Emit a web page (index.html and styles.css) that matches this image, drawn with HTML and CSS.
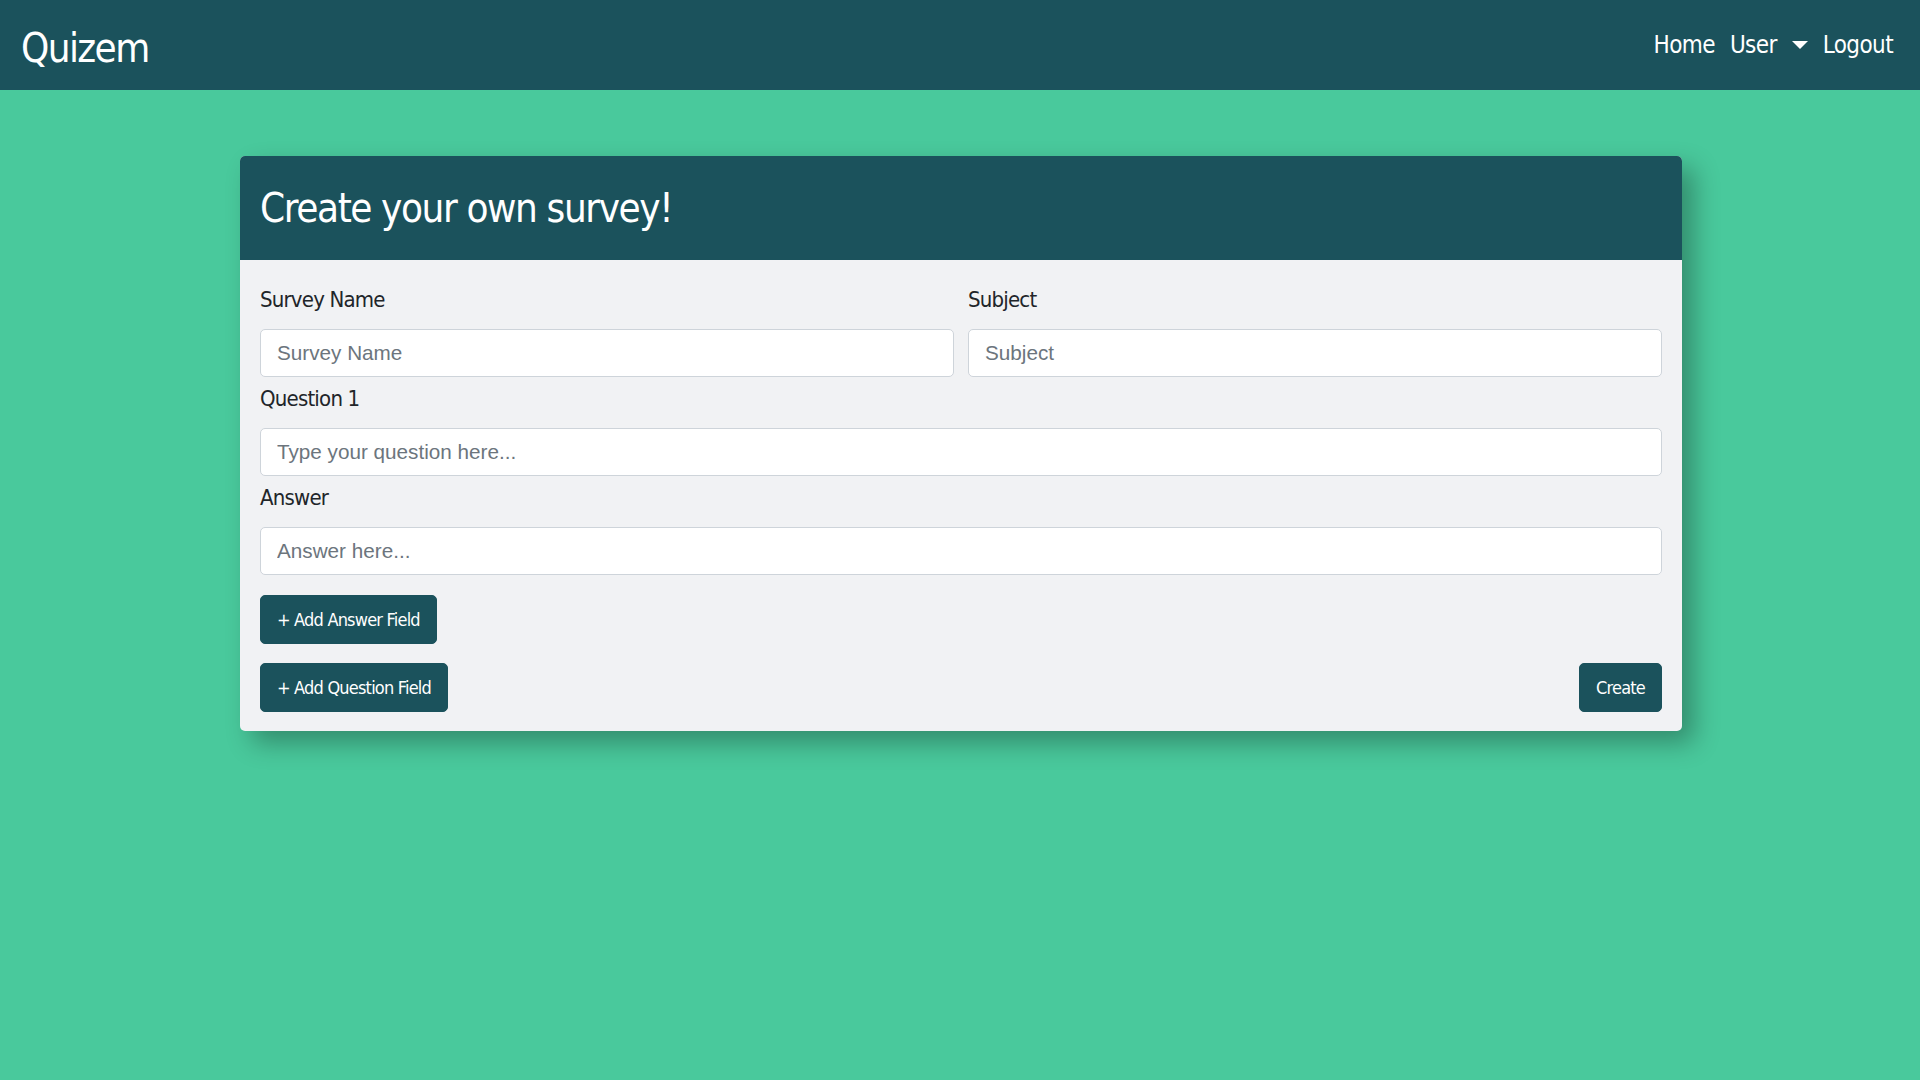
FILE: index.html
```html
<!DOCTYPE html>
<html lang="en">
<head>
<meta charset="utf-8">
<title>Quizem - Create survey</title>
<link rel="stylesheet" href="styles.css">
</head>
<body>
<nav class="navbar">
  <a class="brand" href="#">Quizem</a>
  <ul class="nav">
    <li><a class="nav-link" href="#">Home</a></li>
    <li><a class="nav-link" href="#">User <span class="caret"></span></a></li>
    <li><a class="nav-link" href="#">Logout</a></li>
  </ul>
</nav>
<main class="page">
  <section class="card">
    <header class="card-header">
      <h1 class="card-title">Create your own survey!</h1>
    </header>
    <form class="card-body">
      <div class="row-two">
        <div class="group">
          <label class="label" for="sname">Survey Name</label>
          <input class="input" id="sname" type="text" placeholder="Survey Name">
        </div>
        <div class="group">
          <label class="label" for="subject">Subject</label>
          <input class="input" id="subject" type="text" placeholder="Subject">
        </div>
      </div>
      <div class="group">
        <label class="label" for="q1">Question 1</label>
        <input class="input" id="q1" type="text" placeholder="Type your question here...">
      </div>
      <div class="group">
        <label class="label" for="a1">Answer</label>
        <input class="input" id="a1" type="text" placeholder="Answer here...">
      </div>
      <div class="actions">
        <button class="btn" type="button">+ Add Answer Field</button>
      </div>
      <div class="actions split">
        <button class="btn" type="button">+ Add Question Field</button>
        <button class="btn" type="submit">Create</button>
      </div>
    </form>
  </section>
</main>
</body>
</html>
```
FILE: styles.css
```css
* { box-sizing: border-box; }

html, body {
  margin: 0;
  padding: 0;
}

body {
  min-height: 100vh;
  background: #49c99c;
  font-family: "DejaVu Sans Condensed", "DejaVu Sans", sans-serif;
  font-stretch: condensed;
  color: #212529;
}

.navbar {
  height: 90px;
  background: #1b525c;
  display: flex;
  align-items: flex-start;
  justify-content: space-between;
  padding: 0 27px 0 21px;
}

.brand {
  color: #fff;
  text-decoration: none;
  font-size: 40px;
  letter-spacing: -1.6px;
  line-height: 84px;
  padding-top: 6px;
}

.nav {
  list-style: none;
  margin: 0;
  padding: 0;
  display: flex;
  gap: 15px;
}

.nav-link {
  display: flex;
  align-items: center;
  gap: 15px;
  color: #fff;
  text-decoration: none;
  font-size: 24px;
  letter-spacing: -0.6px;
  line-height: 90px;
}

.caret {
  display: inline-block;
  width: 0;
  height: 0;
  border-left: 8.5px solid transparent;
  border-right: 8.5px solid transparent;
  border-top: 8px solid #fff;
}

.page {
  padding-top: 66px;
}

.card {
  width: 1442px;
  margin: 0 auto 0 240px;
  background: #f1f2f4;
  border-radius: 5px;
  box-shadow: 12px 12px 26px rgba(0, 0, 0, 0.3);
  overflow: hidden;
}

.card-header {
  background: #1b525c;
  height: 104px;
  padding: 0 20px;
}

.card-title {
  margin: 0;
  color: #fff;
  font-weight: 400;
  font-size: 40px;
  letter-spacing: -1.4px;
  line-height: 104px;
}

.card-body {
  padding: 18px 20px 19px;
  margin: 0;
}

.row-two {
  display: grid;
  grid-template-columns: 1fr 1fr;
  column-gap: 14px;
}

.group {
  display: flex;
  flex-direction: column;
}

.label {
  font-size: 22px;
  letter-spacing: -0.8px;
  line-height: 36px;
  padding-top: 4px;
  margin-bottom: 11px;
  color: #212529;
}

.input {
  height: 48px;
  width: 100%;
  padding: 0 16px;
  border: 1px solid #ced4da;
  border-radius: 5px;
  background: #fff;
  font-family: "Liberation Sans", Arial, sans-serif;
  font-stretch: normal;
  font-size: 20.7px;
  color: #495057;
}

.input::placeholder {
  color: #6c757d;
  opacity: 1;
}

.actions {
  display: flex;
  margin-top: 20px;
}

.actions.split {
  margin-top: 19px;
  justify-content: space-between;
}

.btn {
  height: 49px;
  padding: 0 16px;
  border: 1px solid #1b525c;
  border-radius: 5px;
  background: #1b525c;
  color: #fff;
  font-family: "DejaVu Sans Condensed", "DejaVu Sans", sans-serif;
  font-stretch: condensed;
  font-size: 18px;
  letter-spacing: -0.8px;
  line-height: 47px;
  cursor: pointer;
}
```
